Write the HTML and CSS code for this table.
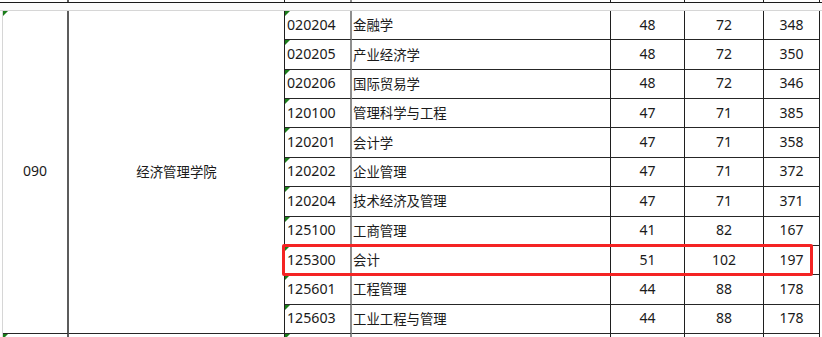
FILE: index.html
```html
<!DOCTYPE html>
<html lang="zh-CN">
<head>
<meta charset="utf-8">
<title>经济管理学院</title>
<link rel="stylesheet" href="styles.css">
</head>
<body>
<div class="sheet">
  <div class="strip">
    <div class="sc a"></div><div class="sc b"></div><div class="sc c"></div><div class="sc d"></div><div class="sc e"></div><div class="sc f"></div><div class="sc g"></div>
  </div>
  <div class="gap"></div>
  <div class="grid">
    <div class="cell a dept flag">090</div>
    <div class="cell b college">经济管理学院</div>

    <div class="cell c code flag">020204</div><div class="cell d name">金融学</div><div class="cell e num">48</div><div class="cell f num">72</div><div class="cell g num">348</div>
    <div class="cell c code flag">020205</div><div class="cell d name">产业经济学</div><div class="cell e num">48</div><div class="cell f num">72</div><div class="cell g num">350</div>
    <div class="cell c code flag">020206</div><div class="cell d name">国际贸易学</div><div class="cell e num">48</div><div class="cell f num">72</div><div class="cell g num">346</div>
    <div class="cell c code flag">120100</div><div class="cell d name">管理科学与工程</div><div class="cell e num">47</div><div class="cell f num">71</div><div class="cell g num">385</div>
    <div class="cell c code flag">120201</div><div class="cell d name">会计学</div><div class="cell e num">47</div><div class="cell f num">71</div><div class="cell g num">358</div>
    <div class="cell c code flag">120202</div><div class="cell d name">企业管理</div><div class="cell e num">47</div><div class="cell f num">71</div><div class="cell g num">372</div>
    <div class="cell c code flag">120204</div><div class="cell d name">技术经济及管理</div><div class="cell e num">47</div><div class="cell f num">71</div><div class="cell g num">371</div>
    <div class="cell c code flag">125100</div><div class="cell d name">工商管理</div><div class="cell e num">41</div><div class="cell f num">82</div><div class="cell g num">167</div>
    <div class="cell c code flag">125300</div><div class="cell d name">会计</div><div class="cell e num">51</div><div class="cell f num">102</div><div class="cell g num">197</div>
    <div class="cell c code flag">125601</div><div class="cell d name">工程管理</div><div class="cell e num">44</div><div class="cell f num">88</div><div class="cell g num">178</div>
    <div class="cell c code flag">125603</div><div class="cell d name">工业工程与管理</div><div class="cell e num">44</div><div class="cell f num">88</div><div class="cell g num">178</div>
  </div>
  <div class="tail">
    <div class="tc a flag"></div><div class="tc b"></div><div class="tc c flag"></div><div class="tc d"></div><div class="tc e"></div><div class="tc f"></div><div class="tc g"></div>
  </div>
  <div class="highlight"></div>
</div>
</body>
</html>
```

FILE: styles.css
```css
html, body {
  margin: 0;
  padding: 0;
  background: #ffffff;
}

body {
  width: 822px;
  height: 337px;
  overflow: hidden;
  font-family: "Noto Sans", "Noto Sans CJK SC", sans-serif;
  color: #1a1a1a;
}

.sheet {
  position: relative;
  width: 822px;
  height: 337px;
}

.strip,
.grid,
.tail {
  display: grid;
  grid-template-columns: 66px 216px 67px 259px 74px 79px 56px;
}

.strip {
  height: 2px;
  padding-left: 3px;
  border-bottom: 1px solid #1a1a1a;
}

.gap {
  height: 7px;
  background: #fbfbfb;
  border-bottom: 1px solid #d6d6d6;
}

.grid {
  margin-left: 2px;
  border-left: 1px solid #d6d6d6;
  height: 323px;
  grid-template-rows: repeat(11, 1fr);
}

.tail {
  margin-left: 2px;
  border-left: 1px solid #d6d6d6;
  height: 3px;
}

.sc,
.tc,
.cell {
  box-sizing: border-box;
  border-right: 1px solid #1f1f1f;
}

.sc.a,
.tc.a,
.cell.a {
  border-right: 2px solid #5c5c5c;
}

.sc.c,
.tc.c,
.cell.c {
  border-right: 2px solid #8e8e8e;
}

.cell {
  position: relative;
  display: flex;
  align-items: center;
  padding-bottom: 2px;
  border-bottom: 1px solid #262626;
  white-space: nowrap;
}

.tc {
  position: relative;
}

.dept {
  grid-column: 1;
  grid-row: 1 / span 11;
  justify-content: center;
  font-size: 14px;
}

.college {
  grid-column: 2;
  grid-row: 1 / span 11;
  justify-content: center;
  font-size: 13.4px;
}

.code {
  padding-left: 2px;
  font-size: 14.2px;
}

.name {
  padding-left: 1px;
  font-size: 13.4px;
}

.num {
  justify-content: center;
  font-size: 14px;
}

.flag::before {
  content: "";
  position: absolute;
  top: 0;
  left: 0;
  width: 0;
  height: 0;
  border-top: 5px solid #1b7d1b;
  border-right: 5px solid transparent;
}

.highlight {
  position: absolute;
  left: 282px;
  top: 244px;
  width: 531px;
  height: 32px;
  box-sizing: border-box;
  border: 3px solid #f42323;
  border-radius: 2px;
}
```
